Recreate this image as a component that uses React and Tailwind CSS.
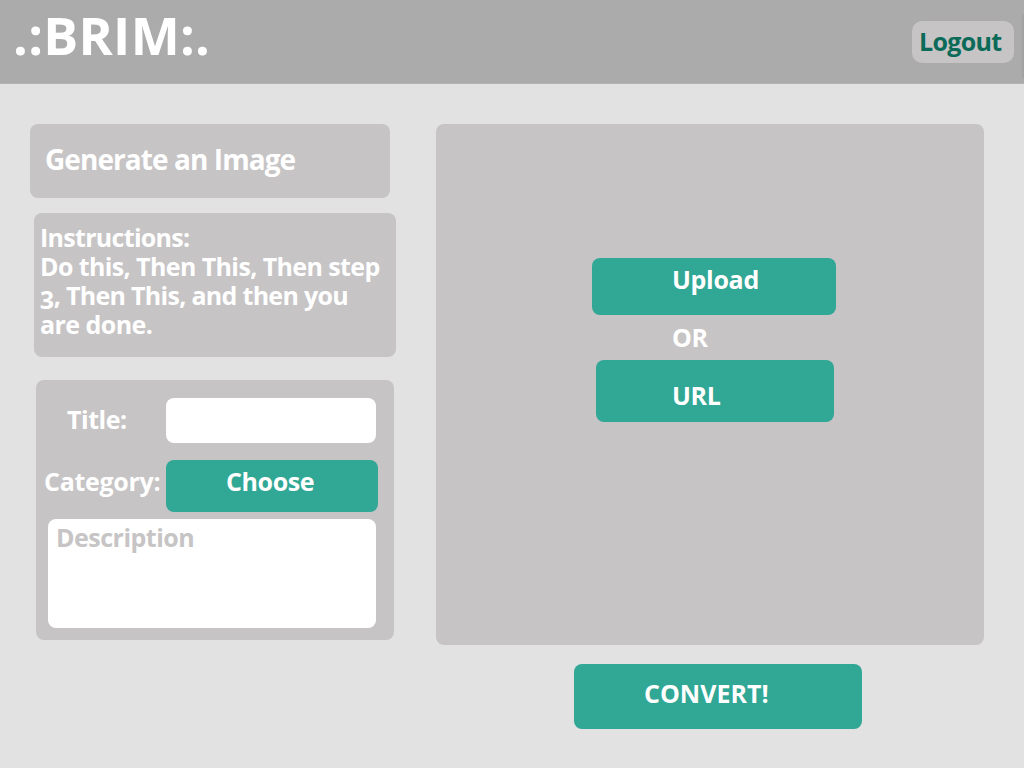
function Header() {
  return (
    <header className="flex h-[84px] shrink-0 items-start border-b border-[#b3b3b3] bg-[#ababab]">
      <h1 className="ml-[13px] mt-[5px] whitespace-nowrap text-[52px] font-bold leading-[60px] tracking-[0.3px] text-white">
        .:BRIM:.
      </h1>
      <button className="ml-auto mr-2 mt-[21px] flex h-[42px] w-[102px] items-start whitespace-nowrap rounded-[10px] bg-[#c6c4c5] pl-[7px] pt-[6px] leading-[29px] tracking-[-0.7px] text-[#0b6b58]">
        Logout
      </button>
      <div className="mt-[14px] h-[64px] w-[2px] bg-[#a2a2a2]" />
    </header>
  );
}

function Details() {
  return (
    <section className="ml-[6px] mt-[23px] h-[260px] w-[358px] rounded-lg bg-[#c6c4c5] pt-[18px]">
      <div className="flex h-[45px]">
        <label className="w-[130px] pl-[31px] pt-[7px] tracking-[-0.45px]">Title:</label>
        <input className="h-[45px] w-[210px] rounded-lg bg-white px-2 text-gray-600 outline-none" />
      </div>
      <div className="mt-[17px] flex h-[52px]">
        <span className="w-[130px] whitespace-nowrap pl-[8px] pt-[7px] tracking-[-0.3px]">Category:</span>
        <button className="flex h-[52px] w-[212px] items-start rounded-lg bg-[#31a795] pl-[60px] pt-[7px] tracking-[-0.4px]">
          Choose
        </button>
      </div>
      <div className="ml-3 mt-[7px] h-[109px] w-[328px] rounded-lg bg-white pl-[8px] pt-1 tracking-[-0.5px] text-[#c6c4c5]">
        Description
      </div>
    </section>
  );
}

export default function App() {
  return (
    <div className="flex h-[768px] w-[1024px] flex-col overflow-hidden bg-[#e2e2e2] font-['Open_Sans',sans-serif] text-[25px] font-bold leading-[29px] tracking-[-0.3px] text-white">
      <Header />
      <main className="flex pl-[30px] pt-10">
        <div className="w-[406px]">
          <h2 className="h-[74px] w-[360px] whitespace-nowrap rounded-lg bg-[#c6c4c5] pl-[15px] pt-[18px] text-[28px] leading-[34px] tracking-[-0.93px]">
            Generate an Image
          </h2>
          <section className="ml-1 mt-[15px] h-[144px] w-[362px] whitespace-nowrap rounded-lg bg-[#c6c4c5] pl-[6px] pt-[10px]">
            <p className="tracking-[-0.7px]">Instructions:</p>
            <p className="tracking-[-0.6px]">Do this, Then This, Then step</p>
            <p className="tracking-[-0.7px] [font-feature-settings:'onum']">3, Then This, and then you</p>
            <p className="tracking-[-0.55px]">are done.</p>
          </section>
          <Details />
        </div>
        <div className="w-[548px]">
          <section className="h-[521px] rounded-lg bg-[#c6c4c5] pt-[134px]">
            <button className="ml-[156px] flex h-[57px] w-[244px] items-start rounded-lg bg-[#31a795] pl-[80px] pt-[7px]">
              Upload
            </button>
            <p className="h-[45px] pl-[236px] pt-2">OR</p>
            <button className="ml-[160px] flex h-[62px] w-[238px] items-start rounded-lg bg-[#31a795] pl-[76px] pt-[21px]">
              URL
            </button>
          </section>
          <button className="ml-[138px] mt-[19px] flex h-[65px] w-[288px] items-start rounded-lg bg-[#31a795] pl-[70px] pt-[15px] tracking-[0px]">
            CONVERT!
          </button>
        </div>
      </main>
    </div>
  );
}
